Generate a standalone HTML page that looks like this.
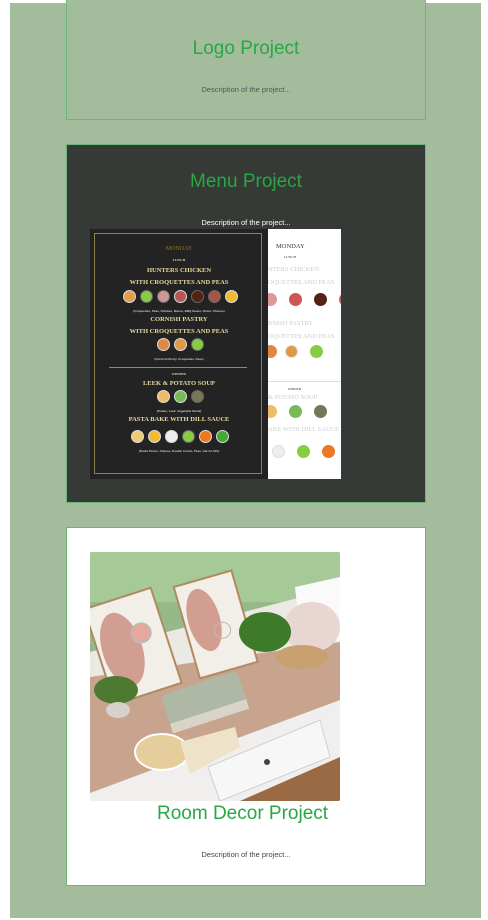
<!DOCTYPE html>
<html><head><meta charset="utf-8"><style>
*{margin:0;padding:0;box-sizing:border-box}
body{width:488px;height:920px;background:#fff;position:relative;overflow:hidden;font-family:"Liberation Sans",sans-serif}
.bg{position:absolute;left:10px;top:3px;width:471px;height:915px;background:#a3bd9c}
.card{position:absolute;left:66px;width:360px;border:1px solid #6fb57a;text-align:center}
h2{position:absolute;left:0;width:100%;font-weight:normal;font-size:19px;color:#28a745;text-align:center}
.d{position:absolute;left:0;width:100%;font-size:7.5px;text-align:center;color:#555}
.abs{position:absolute}
.circ{display:inline-block;width:13px;height:13px;border-radius:50%;margin:0 2px;border:1.5px solid #ddd}
.t{font-family:"Liberation Serif",serif;font-weight:bold;color:#e8d9a0;font-size:6.5px;text-align:center;position:absolute;left:0;width:100%;white-space:nowrap}
.s{font-size:3px;color:#ccc;font-family:"Liberation Sans",sans-serif}
.w{position:absolute;left:0;font-family:'Liberation Serif',serif;font-size:6.5px;color:#ccc;white-space:nowrap}
.row{white-space:nowrap}
</style></head><body>
<div class="bg"></div>

<div class="card" style="top:-2px;height:122px;background:#a3bd9c">
 <h2 style="top:39px">Logo Project</h2>
 <div class="d" style="top:86px">Description of the project...</div>
</div>

<div class="card" style="top:144px;height:359px;background:#353a36">
 <h2 style="top:26px">Menu Project</h2>
 <div class="d" style="top:73px;color:#fff">Description of the project...</div>
 <div class="abs" style="left:23px;top:84px;width:178px;height:250px;background:#232323">
  <div class="abs" style="left:4px;top:4px;width:168px;height:241px;border:1.5px solid #8a8050"></div>
  <div class="t" style="top:17px;color:#8a7a20;font-size:6px;font-weight:normal">MONDAY</div>
  <div class="t" style="top:29px;font-size:3.5px">LUNCH</div>
  <div class="t" style="top:38px">HUNTERS CHICKEN</div>
  <div class="t" style="top:50px">WITH CROQUETTES AND PEAS</div>
  <div class="abs row" style="left:15px;top:61px;width:150px;text-align:center"><span class="circ" style="background:#e0a050"></span><span class="circ" style="background:#8c4;border-color:#666"></span><span class="circ" style="background:#c99;border-color:#666"></span><span class="circ" style="background:#b55"></span><span class="circ" style="background:#521;border-color:#666"></span><span class="circ" style="background:#a54;border-color:#666"></span><span class="circ" style="background:#eb3"></span></div>
  <div class="t s" style="top:80px">(Croquettes, Peas, Chicken, Bacon, BBQ Sauce, Onion, Cheese)</div>
  <div class="t" style="top:87px">CORNISH PASTRY</div>
  <div class="t" style="top:99px">WITH CROQUETTES AND PEAS</div>
  <div class="abs row" style="left:15px;top:109px;width:150px;text-align:center"><span class="circ" style="background:#d84"></span><span class="circ" style="background:#d94"></span><span class="circ" style="background:#8c4;border-color:#666"></span></div>
  <div class="t s" style="top:128px">(Cornish Pastry, Croquettes, Peas)</div>
  <div class="abs" style="left:19px;top:138px;width:138px;height:1px;background:#888"></div>
  <div class="t" style="top:143px;font-size:3.5px">DINNER</div>
  <div class="t" style="top:151px">LEEK &amp; POTATO SOUP</div>
  <div class="abs row" style="left:15px;top:161px;width:150px;text-align:center"><span class="circ" style="background:#eb6"></span><span class="circ" style="background:#7b5"></span><span class="circ" style="background:#775;border-color:#666"></span></div>
  <div class="t s" style="top:180px">(Potato, Leek, Vegetable Stock)</div>
  <div class="t" style="top:187px">PASTA BAKE WITH DILL SAUCE</div>
  <div class="abs row" style="left:15px;top:201px;width:150px;text-align:center"><span class="circ" style="background:#ec7"></span><span class="circ" style="background:#eb3"></span><span class="circ" style="background:#eee"></span><span class="circ" style="background:#8c4;border-color:#666"></span><span class="circ" style="background:#e72"></span><span class="circ" style="background:#4a3"></span></div>
  <div class="t s" style="top:220px">(Pasta Penne, Cheese, Double Cream, Peas, Carrot, Dill)</div>
 </div>
 <div class="abs" style="left:201px;top:84px;width:73px;height:250px;background:#fff;overflow:hidden">
  <div class="abs" style="left:8px;top:14px;font-family:'Liberation Serif',serif;font-size:6.5px;color:#333">MONDAY</div>
  <div class="abs" style="left:16px;top:26px;font-family:'Liberation Serif',serif;font-size:3.5px;color:#333">LUNCH</div>
  <div class="w" style="top:37px">NTERS CHICKEN</div>
  <div class="w" style="top:50px">OQUETTES AND PEAS</div>
  <div class="abs row" style="left:-6px;top:64px"><span class="circ" style="background:#d99;border:0"></span><span class="circ" style="background:#c55;border:0;margin-left:10px"></span><span class="circ" style="background:#521;border:0;margin-left:10px"></span><span class="circ" style="background:#b65;border:0;margin-left:10px"></span></div>
  <div class="w" style="top:91px">RNISH PASTRY</div>
  <div class="w" style="top:104px">OQUETTES AND PEAS</div>
  <div class="abs row" style="left:-6px;top:116px"><span class="circ" style="background:#d84;border:0"></span><span class="circ" style="background:#d94;margin-left:6px"></span><span class="circ" style="background:#8c4;border:0;margin-left:10px"></span></div>
  <div class="abs" style="left:0;top:152px;width:73px;height:1px;background:#ddd"></div>
  <div class="abs" style="left:20px;top:158px;font-family:'Liberation Serif',serif;font-size:3.5px;color:#333">DINNER</div>
  <div class="w" style="top:165px">&amp; POTATO SOUP</div>
  <div class="abs row" style="left:-6px;top:176px"><span class="circ" style="background:#eb6;border:0"></span><span class="circ" style="background:#7b5;border:0;margin-left:10px"></span><span class="circ" style="background:#775;border:0;margin-left:10px"></span></div>
  <div class="w" style="top:197px">AKE WITH DILL SAUCE</div>
  <div class="abs row" style="left:2px;top:216px"><span class="circ" style="background:#eee"></span><span class="circ" style="background:#8c4;border:0;margin-left:10px"></span><span class="circ" style="background:#e72;border:0;margin-left:10px"></span></div>
 </div>
</div>

<div class="card" style="top:527px;height:359px;background:#fff">
 <svg class="abs" style="left:23px;top:24px;border-radius:2px" width="250" height="249" viewBox="0 0 250 249">
  <rect width="250" height="249" fill="#96b98a"/>
  <rect width="250" height="50" fill="#a5c997"/>
  <polygon points="0,100 250,35 250,100 0,130" fill="#ebe9e4"/>
  <polygon points="0,125 250,90 250,148 0,241" fill="#c8a48e"/>
  <polygon points="0,241 250,148 250,249 0,249" fill="#f0efed"/>
  <polygon points="150,249 250,205 250,249" fill="#9a6a45"/>
  <polygon points="118,215 230,168 240,205 130,249" fill="#f7f7f7" stroke="#d0d0d0"/>
  <circle cx="177" cy="210" r="3" fill="#444"/>
  <polygon points="205,35 250,25 250,90 210,80" fill="#fafafa"/>
  <g transform="rotate(-18 40 95)"><rect x="8" y="45" width="70" height="100" fill="#f2eee8" stroke="#b08a60" stroke-width="2"/><ellipse cx="32" cy="95" rx="20" ry="38" fill="#d39e92"/><circle cx="55" cy="85" r="10" fill="#e6a89c" stroke="#9cc" /></g>
  <g transform="rotate(-16 125 70)"><rect x="95" y="25" width="60" height="95" fill="#f2eee8" stroke="#b08a60" stroke-width="2"/><ellipse cx="115" cy="65" rx="16" ry="32" fill="#d39e92"/><circle cx="130" cy="80" r="8" fill="none" stroke="#bba"/></g>
  <ellipse cx="222" cy="75" rx="28" ry="25" fill="#e8d6d0"/>
  <ellipse cx="212" cy="105" rx="26" ry="12" fill="#c9a070"/>
  <ellipse cx="175" cy="80" rx="26" ry="20" fill="#3d7a2a"/>
  <ellipse cx="26" cy="138" rx="22" ry="14" fill="#4d7a30"/>
  <ellipse cx="28" cy="158" rx="12" ry="8" fill="#d8d0cc"/>
  <g transform="rotate(-18 115 150)"><rect x="75" y="130" width="80" height="40" rx="6" fill="#aeb8a4"/><rect x="75" y="160" width="80" height="10" fill="#d8d4c8"/></g>
  <ellipse cx="72" cy="200" rx="27" ry="18" fill="#e6ce9c" stroke="#fff" stroke-width="2"/>
  <polygon points="90,190 145,175 150,195 100,222" fill="#eee2c8"/>
 </svg>
 <h2 style="top:275px;left:90px;width:auto">Room Decor Project</h2>
 <div class="d" style="top:322px;color:#444">Description of the project...</div>
</div>
</body></html>
